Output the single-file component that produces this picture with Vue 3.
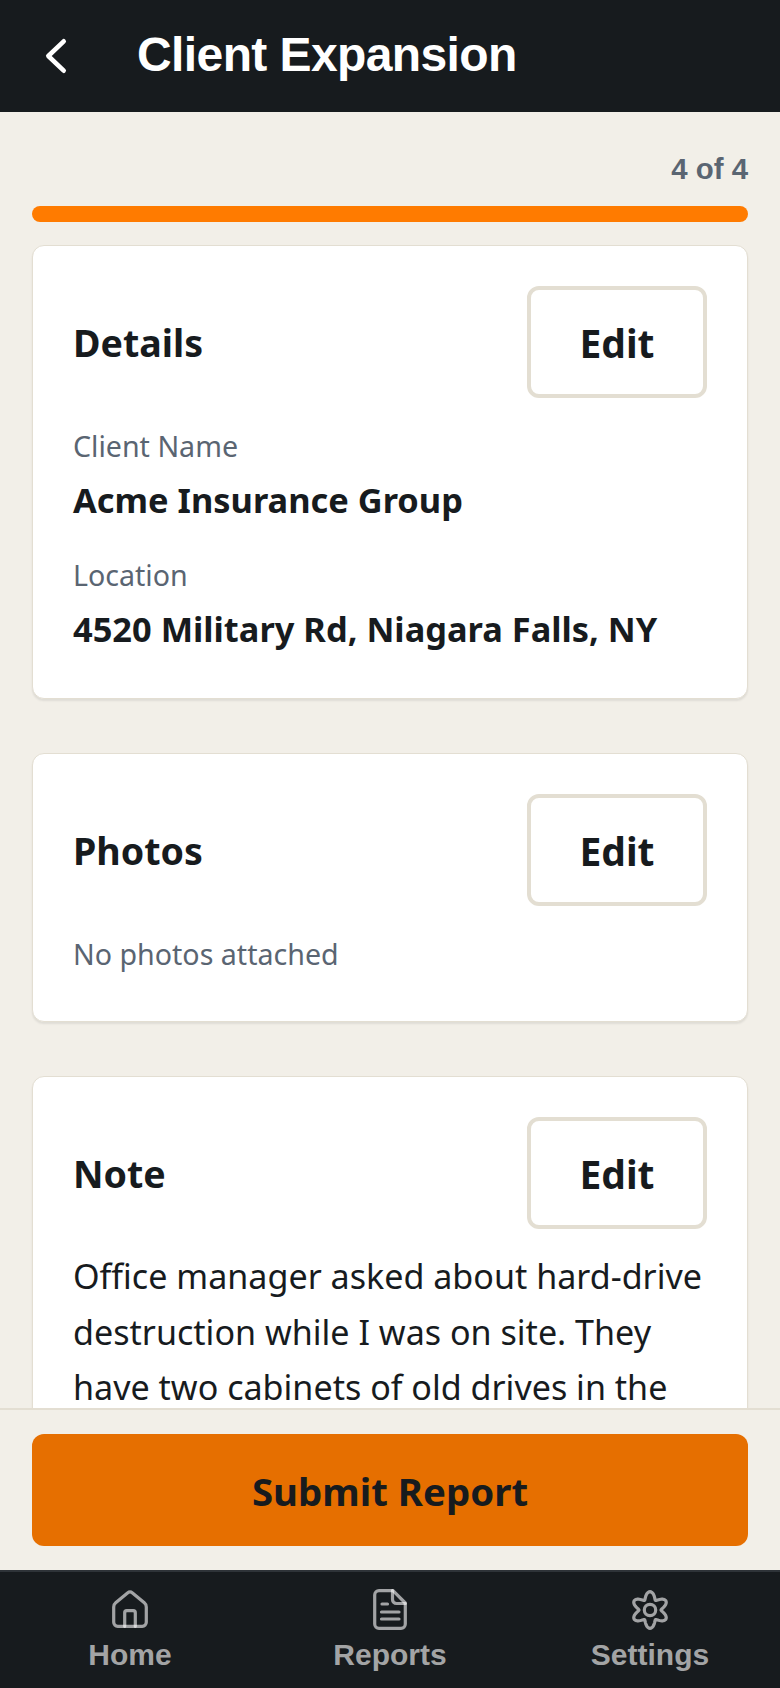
<script setup>
const tabs = [
  { label: 'Home', icon: 'home' },
  { label: 'Reports', icon: 'file' },
  { label: 'Settings', icon: 'gear' },
]

// six soft lobes around the centre of a 48 box
function gearPath() {
  const points = []
  for (let i = 0; i < 144; i++) {
    const t = (i / 144) * Math.PI * 2
    const r = 11 + 7.3 * Math.pow((1 + Math.cos(6 * t)) / 2, 0.8)
    points.push(`${(24 + r * Math.sin(t)).toFixed(2)} ${(24 - r * Math.cos(t)).toFixed(2)}`)
  }
  return `M${points.join('L')}Z`
}
const gear = gearPath()
</script>

<template>
  <div class="screen">
    <header class="topbar">
      <button type="button" class="back" aria-label="Back">
        <svg width="48" height="48" viewBox="0 0 48 48" fill="none" stroke="#fff" stroke-width="4.6" stroke-linecap="round" stroke-linejoin="round">
          <path d="M31.700 9.300 16.300 24l15.400 14.700" />
        </svg>
      </button>
      <h1>Client Expansion</h1>
    </header>

    <main class="content">
      <p class="step">4 of 4</p>
      <div class="progress"><div class="progress-fill"></div></div>

      <section class="card">
        <div class="card-head">
          <h2>Details</h2>
          <button type="button" class="edit">Edit</button>
        </div>
        <p class="label">Client Name</p>
        <p class="value">Acme Insurance Group</p>
        <p class="label second">Location</p>
        <p class="value">4520 Military Rd, Niagara Falls, NY</p>
      </section>

      <section class="card">
        <div class="card-head">
          <h2>Photos</h2>
          <button type="button" class="edit">Edit</button>
        </div>
        <p class="label only">No photos attached</p>
      </section>

      <section class="card">
        <div class="card-head note-head">
          <h2>Note</h2>
          <button type="button" class="edit">Edit</button>
        </div>
        <p class="note">Office manager asked about hard-drive destruction while I was on site. They have two cabinets of old drives in the</p>
      </section>
    </main>

    <div class="submit-bar">
      <button type="button" class="submit">Submit Report</button>
    </div>

    <nav class="tabs">
      <div v-for="tab in tabs" :key="tab.label" class="tab">
        <svg width="48" height="48" viewBox="0 0 48 48" fill="none" stroke="#fff" stroke-opacity="0.6" stroke-width="3.2" stroke-linecap="round" stroke-linejoin="round">
          <template v-if="tab.icon === 'home'">
            <path d="M21.500 6.900a4 4 0 0 1 5 0L38.300 16.800a5.500 5.500 0 0 1 2 4.200V36.300a4 4 0 0 1-4 4H11.700a4 4 0 0 1-4-4V21a5.500 5.500 0 0 1 2-4.200z" />
            <path d="M18.700 40.300V26.700a2 2 0 0 1 2-2h6.600a2 2 0 0 1 2 2V40.300" />
          </template>
          <template v-else-if="tab.icon === 'file'">
            <path d="M27 4.700H13a4.300 4.300 0 0 0-4.300 4.300V38a4.300 4.300 0 0 0 4.300 4.300H35a4.300 4.300 0 0 0 4.300-4.300V17z" />
            <path d="M26.500 4.700V13.500a4 4 0 0 0 4 4H39.300" />
            <path d="M16 18H21.500M15.500 26H33M15.500 33H33" />
          </template>
          <template v-else>
            <path :d="gear" />
            <circle cx="24" cy="24" r="5.700" />
          </template>
        </svg>
        <span>{{ tab.label }}</span>
      </div>
    </nav>
  </div>
</template>

<style scoped>
.screen {
  width: 780px;
  height: 1688px;
  display: flex;
  flex-direction: column;
  background: #f2efe8;
  font-family: "Noto Sans", sans-serif;
  color: #171b1e;
  overflow: hidden;
}

.topbar {
  height: 112px;
  flex: none;
  display: flex;
  align-items: center;
  padding: 0 32px;
  background: #171b1e;
}

.back {
  width: 48px;
  height: 48px;
  padding: 0;
  border: 0;
  background: none;
  margin-right: 57px;
}

.topbar h1 {
  margin: 0 0 4px;
  color: #fff;
  font-family: "Liberation Sans", sans-serif;
  font-size: 48px;
  letter-spacing: -0.6px;
  font-weight: 700;
}

.content {
  flex: 1;
  min-height: 0;
  overflow: hidden;
  padding: 39px 32px 0;
}

.step {
  margin: 0;
  text-align: right;
  color: #5a6572;
  font-family: "Liberation Sans", sans-serif;
  font-size: 29.400px;
  line-height: 36px;
  font-weight: 700;
}

.progress {
  height: 16px;
  margin-top: 19px;
  margin-bottom: 23px;
  border-radius: 8px;
  background: #e3ded2;
  overflow: hidden;
}

.progress-fill {
  width: 100%;
  height: 100%;
  background: #ff7b00;
}

.card {
  padding: 40px 40px 45px;
  margin-bottom: 54px;
  background: #fff;
  border: 1px solid #e3ded2;
  border-radius: 12px;
  box-shadow: 0 2px 2px rgba(0, 0, 0, 0.08);
}

.card-head {
  display: flex;
  align-items: center;
  justify-content: space-between;
  margin-bottom: 28px;
}

.note-head {
  margin-bottom: 20px;
}

.card-head h2 {
  margin: 0;
  font-size: 37.600px;
  font-weight: 700;
}

.edit {
  width: 180px;
  height: 112px;
  border: 4px solid #e3ded2;
  border-radius: 12px;
  background: #fff;
  color: #171b1e;
  font-family: inherit;
  font-size: 39px;
  font-weight: 700;
}

.label {
  margin: 0;
  color: #5a6572;
  font-size: 28.600px;
  line-height: 40px;
}

.label.second {
  margin-top: 31px;
}

.label.only {
  margin-bottom: 2px;
}

.value {
  margin: 10px 0 0;
  font-size: 34.400px;
  line-height: 48px;
  font-weight: 700;
}

.note {
  margin: 0;
  font-size: 34.100px;
  line-height: 55.500px;
}

.submit-bar {
  flex: none;
  padding: 24px 32px;
  background: #f2efe8;
  border-top: 2px solid #e3ded2;
}

.submit {
  display: block;
  width: 100%;
  height: 112px;
  padding: 2px 0 0;
  border: 0;
  border-radius: 12px;
  background: #e66f00;
  color: #171b1e;
  font-family: inherit;
  font-size: 38.400px;
  font-weight: 700;
}

.tabs {
  height: 118px;
  flex: none;
  box-sizing: border-box;
  display: flex;
  background: #171b1e;
  border-top: 2px solid #2e3338;
  padding-top: 14px;
}

.tab {
  flex: 1;
  display: flex;
  flex-direction: column;
  align-items: center;
  color: #a3a4a5;
  font-family: "Liberation Sans", sans-serif;
  font-size: 30px;
  line-height: 36px;
  font-weight: 700;
}

.tab span {
  margin-top: 3px;
}
</style>
